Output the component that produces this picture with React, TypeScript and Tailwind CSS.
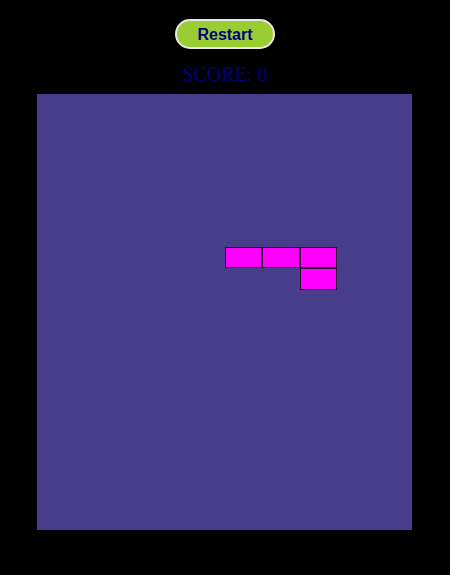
import { useState } from 'react';

const COLS = 10;
const ROWS = 20;

// active piece: J lying flat
const piece = [
  [5, 7],
  [6, 7],
  [7, 7],
  [7, 8],
];

export default function App() {
  const [score, setScore] = useState(0);

  const filled = new Set(piece.map(([x, y]) => `${x},${y}`));
  const cells = [];
  for (let y = 0; y < ROWS; y++) {
    for (let x = 0; x < COLS; x++) {
      const on = filled.has(`${x},${y}`);
      cells.push(
        <div
          key={`${x}-${y}`}
          className={on ? 'bg-[#ff00ff] border-[1.5px] border-[#2e0832]' : ''}
        />
      );
    }
  }

  return (
    <div className="min-h-screen w-full bg-black flex flex-col items-center pt-[19px]">
      <button
        className="h-[30px] w-[100px] pt-[1px] rounded-full bg-[#9acd32] border-2 border-[#e8e8e8] text-[#000080] font-bold text-[16px] font-['Liberation_Sans',Arial,sans-serif]"
        onClick={() => setScore(0)}
      >
        Restart
      </button>

      <div className="mt-[14px] text-[20px] leading-[22px] text-[#000080] font-['Liberation_Serif','Times_New_Roman',serif]">
        SCORE: {score}
      </div>

      <div className="mt-[9px] mr-[1px] w-[375px] h-[436px] bg-[#483d8b] grid grid-cols-10 grid-rows-20">
        {cells}
      </div>
    </div>
  );
}
